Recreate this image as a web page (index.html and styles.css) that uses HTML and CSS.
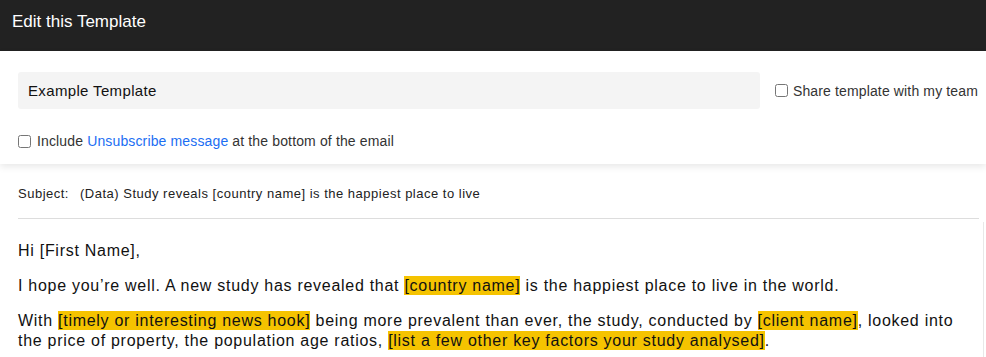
FILE: index.html
```html
<!DOCTYPE html>
<html lang="en">
<head>
<meta charset="utf-8">
<title>Edit this Template</title>
<link rel="stylesheet" href="styles.css">
</head>
<body>
<header class="topbar">Edit this Template</header>
<section class="card">
  <div class="name-row">
    <div class="name-input">Example Template</div>
    <label class="check share"><input type="checkbox" class="box"><span>Share template with my team</span></label>
  </div>
  <label class="check unsub"><input type="checkbox" class="box"><span>Include <a class="link" href="#">Unsubscribe message</a> at the bottom of the email</span></label>
</section>
<main class="editor">
  <div class="subject"><span class="subject-label">Subject:</span><span>(Data) Study reveals [country name] is the happiest place to live</span></div>
  <div class="rule"></div>
  <div class="body">
    <p>Hi [First Name],</p>
    <p>I hope you’re well. A new study has revealed that <span class="hl">[country name]</span> is the happiest place to live in the world.</p>
    <p>With <span class="hl">[timely or interesting news hook]</span> being more prevalent than ever, the study, conducted by <span class="hl">[client name]</span>, looked into the price of property, the population age ratios, <span class="hl">[list a few other key factors your study analysed]</span>.</p>
  </div>
</main>
</body>
</html>
```
FILE: styles.css
```css
html, body {
  margin: 0;
  padding: 0;
  background: #ffffff;
  font-family: "Liberation Sans", Helvetica, Arial, sans-serif;
  color: #222;
  overflow: hidden;
}

.topbar {
  box-sizing: border-box;
  height: 51px;
  background: #222222;
  color: #ffffff;
  font-size: 17px;
  line-height: 20px;
  padding: 12px 0 0 12px;
}

.card {
  position: relative;
  z-index: 1;
  background: #fff;
  padding: 21px 8px 14px 18px;
  box-shadow: 0 3px 7px rgba(0, 0, 0, 0.09);
}

.name-row {
  display: flex;
  align-items: center;
}

.name-input {
  flex: 1;
  box-sizing: border-box;
  height: 37px;
  background: #f4f4f4;
  border-radius: 3px;
  padding-left: 10px;
  font-size: 15px;
  letter-spacing: 0.35px;
  line-height: 37px;
  color: #111;
}

.check {
  display: flex;
  align-items: center;
  font-size: 14px;
  letter-spacing: 0.14px;
  line-height: 18px;
  color: #333;
}

.box {
  margin: 0;
  width: 13px;
  height: 13px;
}

.share {
  margin-left: 15px;
  gap: 5px;
}

.unsub {
  margin-top: 23px;
  gap: 6px;
}

.link {
  color: #1b6ef3;
  text-decoration: none;
}

.editor {
  padding-left: 18px;
}

.subject {
  display: flex;
  gap: 11px;
  margin-top: 20px;
  font-size: 13px;
  letter-spacing: 0.5px;
  line-height: 20px;
  color: #222;
}

.rule {
  height: 1px;
  background: #dddddd;
  margin: 14px 7px 0 0;
}

.body {
  margin: 3px 2px 0 0;
  border-right: 1px solid #e8e8e8;
  padding: 19px 24px 0 0;
  font-size: 16px;
  letter-spacing: 0.72px;
  line-height: 20px;
  color: #111;
  height: 200px;
}

.body p {
  margin: 0 0 15px 0;
}

.hl {
  background: #f5c300;
  padding: 1px 0;
}
```
